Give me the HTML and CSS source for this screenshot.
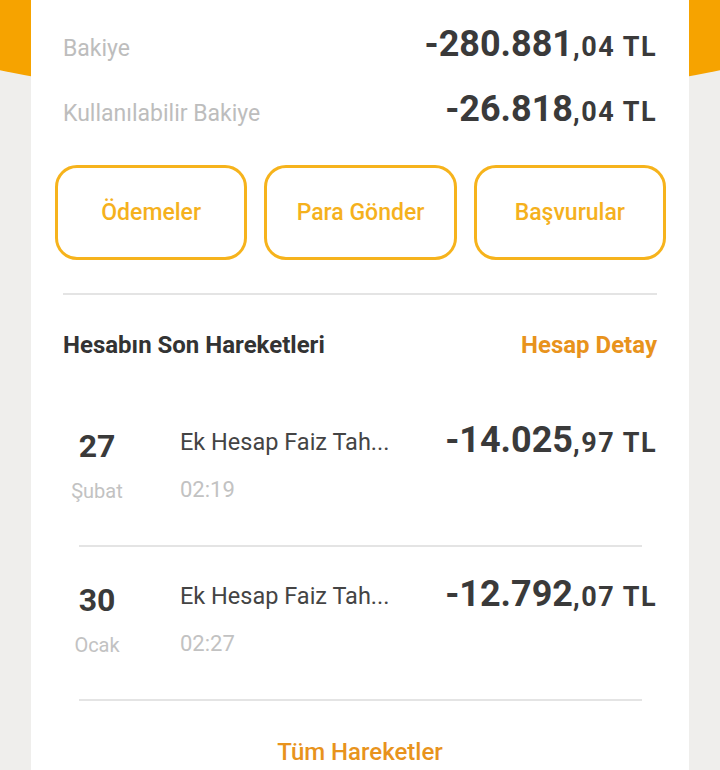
FILE: index.html
```html
<!DOCTYPE html>
<html lang="tr">
<head>
    <meta charset="UTF-8">
    <title>Hesabım</title>
    <link rel="stylesheet" href="styles.css">
</head>
<body>
    <div class="hero"></div>

    <div class="card">
        <div class="balance-row">
            <span class="label">Bakiye</span>
            <span class="amount">-280.881<span class="cents">,04 TL</span></span>
        </div>
        <div class="balance-row">
            <span class="label">Kullanılabilir Bakiye</span>
            <span class="amount">-26.818<span class="cents">,04 TL</span></span>
        </div>

        <div class="actions">
            <a class="action" href="#">Ödemeler</a>
            <a class="action" href="#">Para Gönder</a>
            <a class="action" href="#">Başvurular</a>
        </div>

        <hr class="rule">

        <div class="section-head">
            <h2>Hesabın Son Hareketleri</h2>
            <a class="link" href="#">Hesap Detay</a>
        </div>

        <div class="tx">
            <div class="date">
                <span class="day">27</span>
                <span class="month">Şubat</span>
            </div>
            <div class="info">
                <span class="name">Ek Hesap Faiz Tah...</span>
                <span class="time">02:19</span>
            </div>
            <span class="amount">-14.025<span class="cents">,97 TL</span></span>
        </div>
        <hr class="rule inset">

        <div class="tx">
            <div class="date">
                <span class="day">30</span>
                <span class="month">Ocak</span>
            </div>
            <div class="info">
                <span class="name">Ek Hesap Faiz Tah...</span>
                <span class="time">02:27</span>
            </div>
            <span class="amount">-12.792<span class="cents">,07 TL</span></span>
        </div>
        <hr class="rule inset">

        <div class="all"><a class="link" href="#">Tüm Hareketler</a></div>
    </div>
</body>
</html>
```

FILE: styles.css
```css
body { margin: 0; background: #efeeec; font-family: Roboto, "Liberation Sans", sans-serif; overflow: hidden; }
a { text-decoration: none; }

/* orange header band behind the card */
.hero { position: absolute; top: 0; left: 0; right: 0; height: 110px; background: #f6a300; clip-path: ellipse(560px 140px at 50% -37px); }

.card { position: relative; margin: 0 31px; min-height: 770px; padding: 12px 32px 0; background: #fff; }

.balance-row { display: flex; justify-content: space-between; align-items: baseline; height: 65px; }
.label { font-size: 23px; color: #bdbdbd; }
.amount { font-size: 36px; line-height: 65px; font-weight: 700; color: #3a3a3a; white-space: nowrap; }
.cents { font-size: 27px; letter-spacing: 1.5px; }

.actions { display: flex; gap: 17px; margin: 23px -9px 0 -8px; }
.action { flex: 1; height: 95px; box-sizing: border-box; border: 3px solid #f6b31c; border-radius: 22px; display: flex; align-items: center; justify-content: center; font-size: 23px; font-weight: 500; color: #f5b11d; }

.rule { border: 0; height: 2px; margin: 33px 0 0; background: #e4e4e4; }
.rule.inset { margin: 0 15px 0 16px; }

.section-head { display: flex; justify-content: space-between; align-items: baseline; margin-top: 35px; margin-bottom: 33px; }
.section-head h2 { margin: 0; font-size: 24px; line-height: 30px; font-weight: 700; color: #333; }
.link { font-size: 24px; line-height: 30px; font-weight: 700; color: #e8931c; }

.tx { display: flex; align-items: flex-start; padding: 17px 0 39px; }
.date { width: 68px; display: flex; flex-direction: column; align-items: center; padding-top: 16px; margin-right: 49px; }
.day { font-size: 32px; line-height: 40px; font-weight: 700; color: #3a3a3a; }
.month { font-size: 20px; line-height: 30px; margin-top: 10px; color: #c2c2c2; }
.info { flex: 1; display: flex; flex-direction: column; padding-top: 17px; }
.name { font-size: 23.5px; line-height: 30px; color: #444; }
.time { font-size: 22px; line-height: 30px; margin-top: 18px; color: #c2c2c2; }
.tx .amount { line-height: 44px; padding-top: 8px; }

.all { text-align: center; margin-top: 36px; }
.all .link { font-weight: 500; }
```
